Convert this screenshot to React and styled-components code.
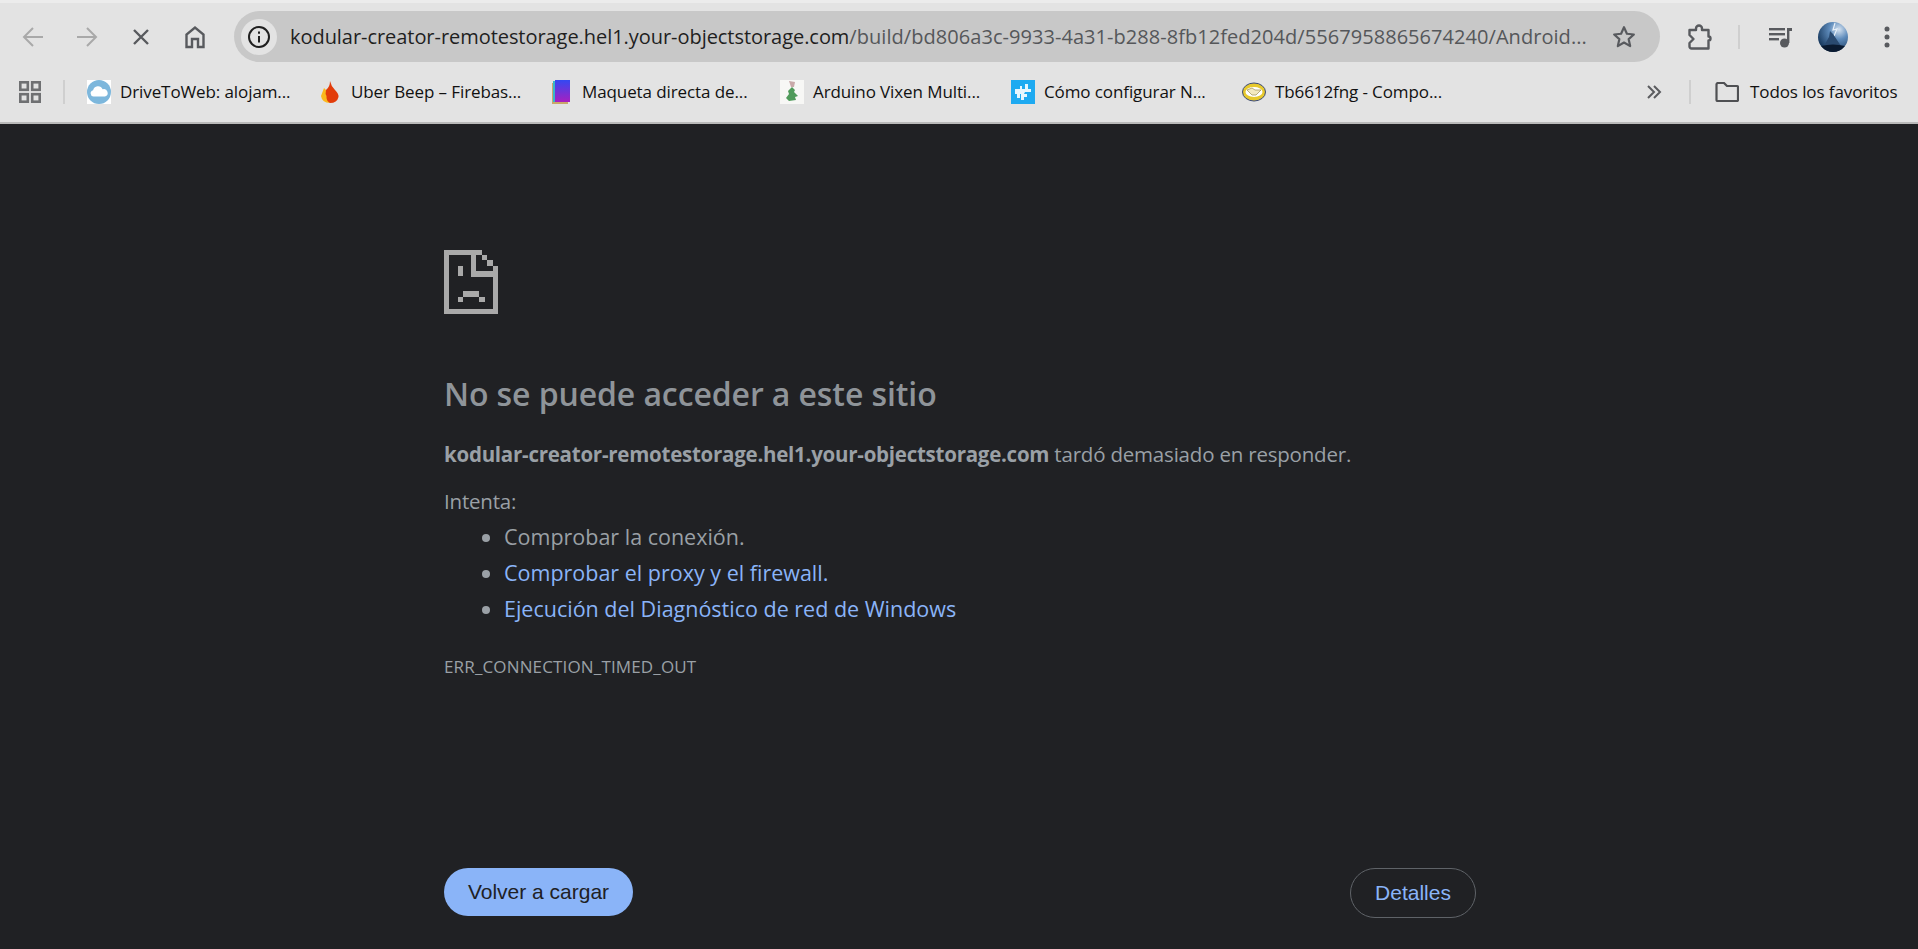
import styled, {createGlobalStyle} from 'styled-components';

const GlobalStyle = createGlobalStyle`
  html, body {
    margin: 0;
    height: 100%;
    background: #202124;
    overflow: hidden;
  }
  * {
    box-sizing: border-box;
  }
`;

const uiFont = `'Open Sans', 'Noto Sans', sans-serif`;

const Window = styled.div`
  width: 1918px;
  height: 949px;
  display: flex;
  flex-direction: column;
  overflow: hidden;
  font-family: ${uiFont};
`;

const Chrome = styled.header`
  height: 124px;
  flex: none;
  background: #e3e3e3;
  border-top: 3px solid #ececec;
  border-bottom: 2px solid #b9b9b9;
  display: flex;
  flex-direction: column;
`;

const Toolbar = styled.div`
  height: 68px;
  padding: 8px 0 0 6px;
  display: flex;
  align-items: flex-start;
`;

const NavButton = styled.div`
  width: ${(p) => p.$w || 54}px;
  height: 51px;
  flex: none;
  display: flex;
  align-items: center;
  justify-content: center;
  color: ${(p) => (p.$off ? '#a9a9a9' : '#585a5e')};
`;

const Omnibox = styled.div`
  width: 1426px;
  height: 51px;
  margin-left: 12px;
  flex: none;
  background: #c8c8c8;
  border-radius: 26px;
  display: flex;
  align-items: center;
  padding: 0 23px 0 7px;
`;

const InfoChip = styled.div`
  width: 36px;
  height: 36px;
  flex: none;
  border-radius: 50%;
  background: #e3e3e3;
  display: flex;
  align-items: center;
  justify-content: center;
  color: #1f1f1f;
`;

const Url = styled.div`
  flex: 1;
  margin-left: 13px;
  font-size: 20px;
  letter-spacing: 0.05px;
  white-space: nowrap;
  overflow: hidden;
  color: #55575a;
  span {
    color: #1f1f1f;
    letter-spacing: -0.05px;
  }
`;

const ActionDivider = styled.div`
  width: 2px;
  height: ${(p) => p.$h || 24}px;
  flex: none;
  background: #cfcfcf;
  margin: ${(p) => p.$m || '0'};
`;

const BookmarksBar = styled.div`
  height: 51px;
  display: flex;
  align-items: center;
  padding-bottom: 10px;
`;

const AppsButton = styled.div`
  width: 63px;
  padding-left: 19px;
  flex: none;
  display: flex;
  color: #6f7072;
`;

const BookmarkList = styled.div`
  display: flex;
  margin-left: 22px;
  width: 1549px;
  flex: none;
`;

const Bookmark = styled.div`
  width: 231px;
  flex: none;
  display: flex;
  align-items: center;
  gap: 9px;
`;

const Favicon = styled.div`
  width: 24px;
  height: 24px;
  flex: none;
  display: flex;
  align-items: center;
  justify-content: center;
`;

const BookmarkLabel = styled.span`
  font-size: 17px;
  letter-spacing: -0.1px;
  color: #111;
  white-space: nowrap;
`;

const Overflow = styled.div`
  width: 36px;
  flex: none;
  margin-right: 17px;
  display: flex;
  justify-content: center;
  color: #5b5c5f;
`;

const AllBookmarks = styled.div`
  display: flex;
  align-items: center;
  gap: 11px;
  margin-left: 24px;
  color: #4f5053;
`;

const Page = styled.main`
  flex: 1;
  background: #202124;
  display: flex;
  flex-direction: column;
  padding: 125px 442px 31px 444px;
`;

const ErrorBody = styled.section`
  flex: 1;
`;

const SadFile = styled.svg`
  display: block;
  width: 54px;
  height: 66px;
`;

const Heading = styled.h1`
  margin: 59px 0 0;
  font-size: 32px;
  line-height: 40px;
  font-weight: 600;
  letter-spacing: -0.1px;
  color: #8f9499;
`;

const Summary = styled.p`
  margin: 26px 0 0;
  font-size: 20.5px;
  line-height: 28px;
  letter-spacing: -0.2px;
  color: #9aa0a6;
  strong {
    font-weight: 700;
    letter-spacing: -0.25px;
  }
`;

const TryLabel = styled.p`
  margin: 19px 0 0;
  font-size: 20.5px;
  line-height: 28px;
  letter-spacing: -0.2px;
  color: #9aa0a6;
`;

const Steps = styled.ul`
  margin: 4px 0 0;
  padding: 0 0 0 60px;
  color: #9aa0a6;
`;

const Step = styled.li`
  font-size: 21.5px;
  line-height: 36px;
  color: ${(p) => (p.$link ? '#8ab4f8' : '#9aa0a6')};
  &::marker {
    color: #9aa0a6;
  }
`;

const ErrorCode = styled.div`
  margin-top: 29px;
  font-size: 17px;
  line-height: 22px;
  letter-spacing: 0.15px;
  color: #9aa0a6;
`;

const Buttons = styled.div`
  display: flex;
  justify-content: space-between;
  align-items: flex-start;
`;

const ReloadButton = styled.button`
  width: 189px;
  height: 48px;
  border: none;
  border-radius: 24px;
  background: #8ab4f8;
  color: #202124;
  font-family: 'Liberation Sans', Arial, sans-serif;
  font-size: 21px;
`;

const DetailsButton = styled.button`
  width: 126px;
  height: 50px;
  border: 1px solid #5f6368;
  border-radius: 25px;
  background: transparent;
  color: #8ab4f8;
  font-family: 'Liberation Sans', Arial, sans-serif;
  font-size: 21px;
`;

const Avatar = () => (
  <svg width="30" height="30" viewBox="0 0 30 30">
    <defs>
      <radialGradient id="sky" cx="0.7" cy="0.25" r="0.8">
        <stop offset="0" stopColor="#d5e2f0" />
        <stop offset="0.4" stopColor="#5f8cbc" />
        <stop offset="1" stopColor="#16375c" />
      </radialGradient>
    </defs>
    <circle cx="15" cy="15" r="15" fill="url(#sky)" />
    <path d="M17 1 L15 8 L19 7 L16 14" fill="none" stroke="#e8f0f8" strokeWidth="1.2" />
    <path d="M7 22 L11 15 L12 9 L15 12 L19 18 L23 24 L18 28 L10 28 Z" fill="#2a4a70" />
    <path d="M3 24 Q15 21 27 24 Q22 30 15 30 Q8 30 3 24 Z" fill="#0a1a30" />
  </svg>
);

const bookmarks = [
  {
    label: 'DriveToWeb: alojam...',
    icon: (
      <svg width="24" height="24" viewBox="0 0 24 24">
        <rect width="24" height="24" fill="#fff" />
        <circle cx="12" cy="12" r="12" fill="#7db7dc" />
        <path d="M6.500 16.500a3.200 3.200 0 0 1-.4-6.300 5 5 0 0 1 9.500-1 3.700 3.700 0 0 1 2.400 7.300Z" fill="#fff" />
      </svg>
    ),
  },
  {
    label: 'Uber Beep – Firebas...',
    icon: (
      <svg width="20" height="24" viewBox="0 0 20 24">
        <path d="M1 16 L4 8 L9 13 L10 23 Q2 23 1 16Z" fill="#fbb81c" />
        <path d="M10 1 Q11 6 15 10 Q19 14 18.500 17 Q17 23 10 23 Q6 21 6.500 16 Q5 14 6 10 Q10 7 10 1Z" fill="#e23c0a" />
      </svg>
    ),
  },
  {
    label: 'Maqueta directa de...',
    icon: (
      <svg width="18" height="24" viewBox="0 0 18 24">
        <rect x="0" y="3" width="16" height="21" fill="#c9a86a" />
        <rect x="1" y="1" width="16" height="21" fill="#37b6c9" />
        <defs>
          <linearGradient id="book" x1="0" y1="0" x2="0" y2="1">
            <stop offset="0" stopColor="#3348f2" />
            <stop offset="1" stopColor="#a81fc0" />
          </linearGradient>
        </defs>
        <rect x="3" y="0" width="15" height="22" fill="url(#book)" />
      </svg>
    ),
  },
  {
    label: 'Arduino Vixen Multi...',
    icon: (
      <svg width="24" height="24" viewBox="0 0 24 24">
        <rect width="24" height="24" fill="#f7f7f5" />
        <path d="M12 7 L15 10 L14 12 L18 16 L15 17 L16 20 L9 21 L6 18 L9 14 L8 11Z" fill="#4f9a5a" />
        <path d="M9 1 L15 2 L14 7 L11 7Z" fill="#c9a9a9" />
      </svg>
    ),
  },
  {
    label: 'Cómo configurar N...',
    icon: (
      <svg width="24" height="24" viewBox="0 0 24 24">
        <rect width="24" height="24" fill="#1eaaf1" />
        <path d="M4 9h5V6h2v3h3V4h3v5h3v3h-6l-1 2h3v3h-3v3h-3v-6H9v4H6v-4H4Z" fill="#e6f6fe" />
      </svg>
    ),
  },
  {
    label: 'Tb6612fng - Compo...',
    icon: (
      <svg width="24" height="20" viewBox="0 0 24 20">
        <ellipse cx="12" cy="10" rx="11.500" ry="9" fill="#e7c92d" stroke="#3b4a78" strokeWidth="1" />
        <ellipse cx="12" cy="10" rx="8.500" ry="5" fill="#fff" />
        <path d="M5 8 L10 6 L13 8 L19 8 L14 13 L10 13Z" fill="#f3e9c0" stroke="#9a8e55" strokeWidth="0.7" />
      </svg>
    ),
  },
];

const App = () => {
  return (
    <Window>
      <GlobalStyle />
      <Chrome>
        <Toolbar>
          <NavButton $off>
            <svg width="24" height="24" viewBox="0 0 24 24" fill="none" stroke="currentColor" strokeWidth="2">
              <path d="M22 12H3M12 3l-9 9 9 9" />
            </svg>
          </NavButton>
          <NavButton $off>
            <svg width="24" height="24" viewBox="0 0 24 24" fill="none" stroke="currentColor" strokeWidth="2">
              <path d="M2 12h19M12 3l9 9-9 9" />
            </svg>
          </NavButton>
          <NavButton>
            <svg width="24" height="24" viewBox="0 0 24 24" fill="none" stroke="currentColor" strokeWidth="2.400">
              <path d="M5 5l14 14M19 5L5 19" />
            </svg>
          </NavButton>
          <NavButton>
            <svg width="24" height="24" viewBox="0 0 24 24" fill="none" stroke="currentColor" strokeWidth="2.400">
              <path d="M3.500 22V9.500L12 2.500l8.500 7V22h-5.500v-8h-6v8Z" />
            </svg>
          </NavButton>
          <Omnibox>
            <InfoChip>
              <svg width="24" height="24" viewBox="0 0 24 24" fill="none" stroke="currentColor" strokeWidth="2">
                <circle cx="12" cy="12" r="10" />
                <path d="M12 11v6.500" />
                <path d="M12 6.500v2.200" />
              </svg>
            </InfoChip>
            <Url>
              <span>kodular-creator-remotestorage.hel1.your-objectstorage.com</span>
              /build/bd806a3c-9933-4a31-b288-8fb12fed204d/5567958865674240/Android...
            </Url>
            <NavButton $w={26}>
              <svg width="26" height="26" viewBox="0 0 24 24" fill="none" stroke="currentColor" strokeWidth="2" strokeLinejoin="round">
                <path d="M12 3l2.700 6 6.400.7-4.800 4.300 1.400 6.400-5.700-3.300-5.700 3.300 1.400-6.400L2.900 9.700 9.300 9Z" />
              </svg>
            </NavButton>
          </Omnibox>
          <NavButton $w={78}>
            <svg width="26" height="26" viewBox="-2 0 26 26" fill="none" stroke="currentColor" strokeWidth="2.400" strokeLinejoin="round">
              <path d="M1.500 6H8V4.500a3 3 0 0 1 6 0V6h6.500v6.500a2 2 0 0 1 0 4V24.500H3.500a2 2 0 0 1-2-2V19l4-4-4-4Z" />
            </svg>
          </NavButton>
          <ActionDivider $h={24} $m="14px 0 0" />
          <NavButton $w={78}>
            <svg width="26" height="24" viewBox="-3 0 26 24" fill="currentColor">
              <rect x="0" y="3" width="16" height="2.400" />
              <rect x="0" y="8" width="16" height="2.400" />
              <rect x="0" y="13" width="10" height="2.400" />
              <rect x="18" y="3" width="6" height="3" />
              <rect x="18" y="3" width="2.400" height="15" />
              <circle cx="15.500" cy="18" r="4.500" />
            </svg>
          </NavButton>
          <NavButton $w={30}>
            <Avatar />
          </NavButton>
          <NavButton $w={78}>
            <svg width="8" height="24" viewBox="0 0 8 24" fill="currentColor">
              <circle cx="4" cy="4" r="2.500" />
              <circle cx="4" cy="12" r="2.500" />
              <circle cx="4" cy="20" r="2.500" />
            </svg>
          </NavButton>
        </Toolbar>
        <BookmarksBar>
          <AppsButton>
            <svg width="22" height="22" viewBox="0 0 22 22" fill="none" stroke="currentColor" strokeWidth="2.600">
              <rect x="1.300" y="1.300" width="7.500" height="7.500" />
              <rect x="13.200" y="1.300" width="7.500" height="7.500" />
              <rect x="1.300" y="13.200" width="7.500" height="7.500" />
              <rect x="13.200" y="13.200" width="7.500" height="7.500" />
            </svg>
          </AppsButton>
          <ActionDivider $h={24} />
          <BookmarkList>
            {bookmarks.map((b) => (
              <Bookmark key={b.label}>
                <Favicon>{b.icon}</Favicon>
                <BookmarkLabel>{b.label}</BookmarkLabel>
              </Bookmark>
            ))}
          </BookmarkList>
          <Overflow>
            <svg width="16" height="14" viewBox="0 0 16 14" fill="none" stroke="currentColor" strokeWidth="2">
              <path d="M2 1l6 6-6 6M8 1l6 6-6 6" />
            </svg>
          </Overflow>
          <ActionDivider $h={24} />
          <AllBookmarks>
            <svg width="24" height="20" viewBox="0 0 24 20" fill="none" stroke="currentColor" strokeWidth="2.200" strokeLinejoin="round">
              <path d="M1.500 2.500a1.500 1.500 0 0 1 1.500-1.500h6l3 3h10a1 1 0 0 1 1 1V18a1 1 0 0 1-1 1H2.500a1 1 0 0 1-1-1Z" />
            </svg>
            <BookmarkLabel>Todos los favoritos</BookmarkLabel>
          </AllBookmarks>
        </BookmarksBar>
      </Chrome>
      <Page>
        <ErrorBody>
          <SadFile viewBox="0 0 10 12" fill="#a9a9a9" shapeRendering="crispEdges">
            <path d="M0 0h7v1H6v3h3V3h1v9H0ZM1 1v10h8V5H5V1Z" fillRule="evenodd" />
            <rect x="7" y="1" width="1" height="1" />
            <rect x="8" y="2" width="1" height="1" />
            <rect x="2.500" y="3" width="1" height="1.900" />
            <rect x="3.500" y="7.700" width="3" height="1" />
            <rect x="2.500" y="8.700" width="1" height="1" />
            <rect x="6.500" y="8.700" width="1" height="1" />
          </SadFile>
          <Heading>No se puede acceder a este sitio</Heading>
          <Summary>
            <strong>kodular-creator-remotestorage.hel1.your-objectstorage.com</strong> tardó demasiado en responder.
          </Summary>
          <TryLabel>Intenta:</TryLabel>
          <Steps>
            <Step>Comprobar la conexión.</Step>
            <Step $link>Comprobar el proxy y el firewall.</Step>
            <Step $link>Ejecución del Diagnóstico de red de Windows</Step>
          </Steps>
          <ErrorCode>ERR_CONNECTION_TIMED_OUT</ErrorCode>
        </ErrorBody>
        <Buttons>
          <ReloadButton>Volver a cargar</ReloadButton>
          <DetailsButton>Detalles</DetailsButton>
        </Buttons>
      </Page>
    </Window>
  );
};

export default App;
